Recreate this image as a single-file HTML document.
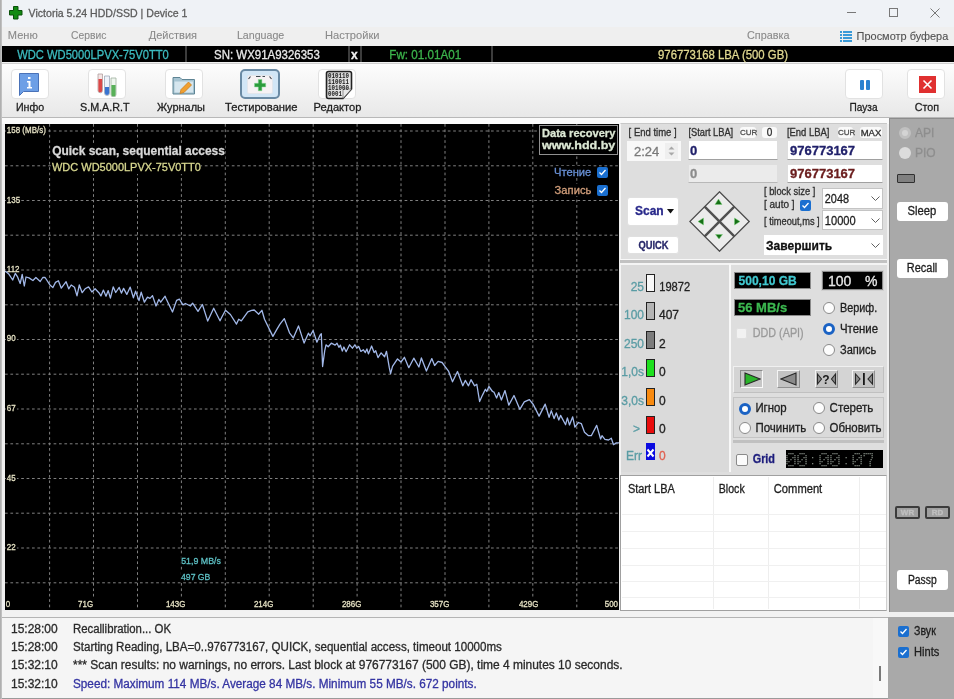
<!DOCTYPE html>
<html><head><meta charset="utf-8">
<style>
*{margin:0;padding:0;box-sizing:border-box}
html,body{width:954px;height:699px;overflow:hidden;background:#f0f0f0;font-family:"Liberation Sans",sans-serif;position:relative;-webkit-text-stroke:0.3px currentColor}
.a{position:absolute;white-space:nowrap}
#title{left:0;top:0;width:954px;height:27px;background:#eff2f6}
#menu{left:0;top:27px;width:954px;height:19px;background:#efefef}
.mi{position:absolute;top:29px;font-size:10.5px;color:#8a8a8a;-webkit-text-stroke:0.1px currentColor;white-space:nowrap}
#bbar{left:2px;top:46px;width:952px;height:16px;background:#000}
.bt{position:absolute;top:48px;font-size:12px;line-height:14px;white-space:nowrap}
.sep{position:absolute;top:46px;width:2px;height:16px;background:#3c3c3c}
#tb{left:2px;top:63px;width:952px;height:55px;background:linear-gradient(#fdfdfd,#e8e8e8);border-top:1px solid #d0d0d0;border-bottom:1px solid #b8b8b8}
.tbb{position:absolute;top:69px;width:38px;height:30px;background:#fff;border:1px solid #e2e2e2;border-radius:4px}
.tbl{position:absolute;top:101px;font-size:11.5px;color:#1e1e1e;white-space:nowrap;text-align:center}
#chart{left:5px;top:124px;width:614px;height:486px;background:#000;overflow:hidden}
.cl{position:absolute;font-size:9.5px;line-height:11px;color:#e6e2c4;background:#000;padding:0 1px;white-space:nowrap;transform:scaleX(.84);transform-origin:0 0}
#rp{left:620px;top:123px;width:267px;height:488px;background:#dedede;border-left:1px solid #f4f4f4;border-top:1px solid #c8c8c8}
.sl{position:absolute;font-size:10px;line-height:12px;color:#303030;white-space:nowrap}
.inp{position:absolute;background:#fff;border:1px solid #dedede;border-bottom:1px solid #a0a0a0}
.wbtn{position:absolute;background:#fff;border-radius:3px;border:1px solid #e0e0e0}
.rad{position:absolute;width:12px;height:12px;border-radius:50%;background:#fdfdfd;border:1px solid #8a8a8a}
.rad.on{background:#fff;border:3.5px solid #1a62c4}
.cb{position:absolute;width:11px;height:11px;border-radius:2px;background:#1a6fd0}
.cb svg{position:absolute;left:0;top:0}
.t12{font-size:12px;color:#1e1e1e}
#gp{left:889px;top:118px;width:65px;height:494px;background:#a9a9a9;border-left:1px solid #8c8c8c;border-top:1px solid #8c8c8c}
#log{left:2px;top:617px;width:886px;height:82px;background:#f5f5f5;border-top:1px solid #b4b4b4;border-bottom:1px solid #9a9a9a}
.lr{position:absolute;font-size:12px;line-height:14px;color:#2a2a2a;white-space:nowrap}
#gp2{left:888px;top:617px;width:66px;height:82px;background:#a9a9a9}
</style></head><body><div style="position:absolute;left:0;top:0;width:954px;height:699px;will-change:transform">
<div class="a" style="left:0;top:0;width:2px;height:699px;background:linear-gradient(90deg,#a8a8a8,#c8c8c8);z-index:5"></div>
<div id="title" class="a"></div>
<svg class="a" style="left:9px;top:6px" width="14" height="14" viewBox="0 0 14 14"><path d="M4.5 0.5h4.5v4h4v4.5h-4v4h-4.5v-4h-4v-4.5h4z" fill="#128a12" stroke="#0a500a" stroke-width="1"/></svg>
<div class="a" style="left:29px;top:6.5px;font-size:11.3px;color:#5c5c5c;;transform-origin:0 0;transform:translateX(-0.40px) scaleX(0.9355)">Victoria 5.24 HDD/SSD | Device 1</div>
<div class="a" style="left:847px;top:12px;width:9px;height:1px;background:#787878"></div>
<div class="a" style="left:889px;top:8px;width:9px;height:9px;border:1px solid #787878"></div>
<svg class="a" style="left:930px;top:8px" width="10" height="10"><path d="M0.5 0.5L9.5 9.5M9.5 0.5L0.5 9.5" stroke="#787878" stroke-width="1"/></svg>

<div id="menu" class="a"></div>
<div class="mi" style="left:8px;;transform-origin:0 0;transform:translateX(-0.20px) scaleX(1.0532)">Меню</div>
<div class="mi" style="left:71px;;transform-origin:0 0;transform:translateX(0.00px) scaleX(0.9814)">Сервис</div>
<div class="mi" style="left:149px;;transform-origin:0 0;transform:translateX(-0.20px) scaleX(1.0475)">Действия</div>
<div class="mi" style="left:237px;;transform-origin:0 0;transform:translateX(-0.10px) scaleX(1.0146)">Language</div>
<div class="mi" style="left:325px;;transform-origin:0 0;transform:translateX(0.00px) scaleX(1.0583)">Настройки</div>
<div class="mi" style="left:747px;;transform-origin:0 0;transform:translateX(0.00px) scaleX(1.0315)">Справка</div>
<svg class="a" style="left:840px;top:31px" width="12" height="12"><g fill="#3a9ad8"><rect x="0" y="0" width="2" height="2"/><rect x="3" y="0" width="9" height="2"/><rect x="0" y="3" width="2" height="2"/><rect x="3" y="3" width="9" height="2"/><rect x="0" y="6" width="2" height="2"/><rect x="3" y="6" width="9" height="2"/><rect x="0" y="9" width="2" height="2"/><rect x="3" y="9" width="9" height="2"/></g></svg>
<div class="mi" style="left:857px;color:#505050;font-size:11px;top:29.5px;;transform-origin:0 0;transform:translateX(-0.40px) scaleX(0.9952)">Просмотр буфера</div>

<div id="bbar" class="a"></div>
<div class="bt" style="left:17px;color:#3cbcc0;;transform-origin:0 0;transform:translateX(0.20px) scaleX(0.9316)">WDC WD5000LPVX-75V0TT0</div>
<div class="sep" style="left:185px"></div>
<div class="bt" style="left:214px;color:#e8e8e8;;transform-origin:0 0;transform:translateX(0.10px) scaleX(0.9544)">SN: WX91A9326353</div>
<div class="sep" style="left:348px"></div>
<div class="bt" style="left:351px;color:#f0f0f0;font-weight:bold">x</div>
<div class="sep" style="left:360px"></div>
<div class="bt" style="left:389px;color:#3cb44c;;transform-origin:0 0;transform:translateX(0.30px) scaleX(0.9710)">Fw: 01.01A01</div>
<div class="sep" style="left:491px"></div>
<div class="bt" style="left:658px;color:#e0d890;;transform-origin:0 0;transform:translateX(0.00px) scaleX(0.9459)">976773168 LBA (500 GB)</div>

<div id="tb" class="a"></div>
<div class="tbb" style="left:11px"></div>
<svg class="a" style="left:19px;top:73px" width="21" height="23" viewBox="0 0 21 23"><path d="M0.5 0.5h19v18h-15l-4 4z" fill="#6d9fe6" stroke="#4a72b8"/><rect x="9" y="4" width="2.5" height="2" fill="#fff"/><path d="M8 8h3.5v6h1.5v1.5h-5v-1.5h1.5v-4.5h-1.5z" fill="#fff"/></svg>
<div class="tbl" style="left:16px;;transform-origin:0 0;transform:translateX(-0.10px) scaleX(0.9283)">Инфо</div>
<div class="tbb" style="left:88px"></div>
<svg class="a" style="left:96px;top:73px" width="22" height="24" viewBox="0 0 22 24"><path d="M2 1h4.5v16.5a2.25 2.25 0 0 1-4.5 0z" fill="#f4e4e4" stroke="#b0a0a0" stroke-width="0.8"/><path d="M2.4 6h3.7v11.5a1.85 1.85 0 0 1-3.7 0z" fill="#dc4848"/><path d="M8.5 3h5v17a2.5 2.5 0 0 1-5 0z" fill="#eef2fa" stroke="#a0a8b8" stroke-width="0.8"/><path d="M8.9 14h4.2v6a2.1 2.1 0 0 1-4.2 0z" fill="#3a74d0"/><path d="M15 5h5v16.5a2.5 2.5 0 0 1-5 0z" fill="#eef6ee" stroke="#a0b0a0" stroke-width="0.8"/><path d="M15.4 12h4.2v9.5a2.1 2.1 0 0 1-4.2 0z" fill="#58b058"/></svg>
<div class="tbl" style="left:80px;;transform-origin:0 0;transform:translateX(0.00px) scaleX(0.9353)">S.M.A.R.T</div>
<div class="tbb" style="left:165px"></div>
<svg class="a" style="left:172px;top:75px" width="24" height="21" viewBox="0 0 24 21"><path d="M1 2.5h7l2 2h12.5v14.5h-21.5z" fill="#a6c4d2" stroke="#5e8494" stroke-width="1"/><rect x="2.5" y="6.5" width="18.5" height="11" fill="#d6e6ee"/><path d="M8 18.5l1-4 7.5-7.5 3 3-7.5 7.5z" fill="#f0a030" stroke="#c87818" stroke-width="0.7"/></svg>
<div class="tbl" style="left:157px;;transform-origin:0 0;transform:translateX(0.00px) scaleX(0.9555)">Журналы</div>
<div class="tbb" style="left:240px;width:40px;background:#d2e6f6;border:2px solid #6a8aa4;border-radius:5px"></div>
<svg class="a" style="left:246px;top:72px" width="28" height="23" viewBox="0 0 28 23"><rect x="1.5" y="3.5" width="25" height="18" rx="1.5" fill="#f6f2f4" stroke="#e2e6ec" stroke-width="1"/><path d="M2.5 7l2-2.5M25.5 7l-2-2.5M10 4.5h4.5M16.5 4.5h2.5" stroke="#404850" stroke-width="1.2"/><path d="M12.3 7.5h3.6v3.8h3.8v3.6h-3.8v3.8h-3.6v-3.8h-3.8v-3.6h3.8z" fill="#2c9c3c" stroke="#8ad89a" stroke-width="0.5" stroke-linejoin="round"/></svg>
<div class="tbl" style="left:225px;;transform-origin:0 0;transform:translateX(0.00px) scaleX(0.9723)">Тестирование</div>
<div class="tbb" style="left:318px"></div>
<svg class="a" style="left:325px;top:70px" width="29" height="31" viewBox="0 0 29 31"><defs><linearGradient id="pg" x1="0" y1="0" x2="1" y2="1"><stop offset="0" stop-color="#c8c8c8"/><stop offset="1" stop-color="#f4f4f4"/></linearGradient></defs><path d="M1.5 3.5Q1.5 1.5 3.5 1.5H24.5Q26.5 1.5 26.5 3.5V19L18 28.5H3.5Q1.5 28.5 1.5 26.5Z" fill="url(#pg)" stroke="#222" stroke-width="1.6"/><path d="M18 28.5L26.5 19H19Q18 19 18 20Z" fill="#e8e8e8" stroke="#555" stroke-width="0.6"/><g font-family="Liberation Mono" font-weight="bold" font-size="6.4" fill="#1a1a1a" style="-webkit-text-stroke:0"><text x="3" y="8" textLength="21" lengthAdjust="spacingAndGlyphs">010110</text><text x="3" y="14" textLength="21" lengthAdjust="spacingAndGlyphs">110011</text><text x="3" y="20" textLength="21" lengthAdjust="spacingAndGlyphs">101000</text><text x="3" y="26" textLength="14" lengthAdjust="spacingAndGlyphs">0001</text></g></svg>
<div class="tbl" style="left:314px;;transform-origin:0 0;transform:translateX(-0.40px) scaleX(0.9654)">Редактор</div>
<div class="tbb" style="left:845px"></div>
<div class="a" style="left:860px;top:80px;width:4px;height:10px;background:#2a82d0;border-radius:1px"></div>
<div class="a" style="left:866px;top:80px;width:4px;height:10px;background:#2a82d0;border-radius:1px"></div>
<div class="tbl" style="left:849px;;transform-origin:0 0;transform:translateX(0.50px) scaleX(0.8794)">Пауза</div>
<div class="tbb" style="left:907px"></div>
<svg class="a" style="left:919px;top:76px" width="17" height="17"><rect width="17" height="17" fill="#e03030"/><path d="M4.5 4.5l8 8M12.5 4.5l-8 8" stroke="#fff" stroke-width="1.6"/></svg>
<div class="tbl" style="left:914px;;transform-origin:0 0;transform:translateX(0.80px) scaleX(0.9318)">Стоп</div>

<div class="a" style="left:1px;top:118px;width:888px;height:6px;background:#fafafa"></div>
<div id="chart" class="a">
<svg style="position:absolute;left:0;top:0" width="614" height="486">
<g stroke="#808080" stroke-width="1" stroke-dasharray="2.7 2.7">
<line x1="44.6" y1="0" x2="44.6" y2="486"/>
<line x1="88.5" y1="0" x2="88.5" y2="486"/>
<line x1="132.5" y1="0" x2="132.5" y2="486"/>
<line x1="176.4" y1="0" x2="176.4" y2="486"/>
<line x1="220.3" y1="0" x2="220.3" y2="486"/>
<line x1="264.2" y1="0" x2="264.2" y2="486"/>
<line x1="308.2" y1="0" x2="308.2" y2="486"/>
<line x1="352.1" y1="0" x2="352.1" y2="486"/>
<line x1="396.0" y1="0" x2="396.0" y2="486"/>
<line x1="440.0" y1="0" x2="440.0" y2="486"/>
<line x1="483.9" y1="0" x2="483.9" y2="486"/>
<line x1="527.8" y1="0" x2="527.8" y2="486"/>
<line x1="571.8" y1="0" x2="571.8" y2="486"/>
<line x1="0" y1="7.0" x2="614" y2="7.0"/>
<line x1="0" y1="41.8" x2="614" y2="41.8"/>
<line x1="0" y1="76.5" x2="614" y2="76.5"/>
<line x1="0" y1="111.2" x2="614" y2="111.2"/>
<line x1="0" y1="146.0" x2="614" y2="146.0"/>
<line x1="0" y1="180.8" x2="614" y2="180.8"/>
<line x1="0" y1="215.5" x2="614" y2="215.5"/>
<line x1="0" y1="250.2" x2="614" y2="250.2"/>
<line x1="0" y1="285.0" x2="614" y2="285.0"/>
<line x1="0" y1="319.8" x2="614" y2="319.8"/>
<line x1="0" y1="354.5" x2="614" y2="354.5"/>
<line x1="0" y1="389.2" x2="614" y2="389.2"/>
<line x1="0" y1="424.0" x2="614" y2="424.0"/>
<line x1="0" y1="458.8" x2="614" y2="458.8"/>
</g>
</svg>
<div class="cl" style="left:1px;top:0px">158 (MB/s)</div>
<div class="cl" style="left:1px;top:70px">135</div>
<div class="cl" style="left:1px;top:139px">112</div>
<div class="cl" style="left:1px;top:208px">90</div>
<div class="cl" style="left:1px;top:278px">67</div>
<div class="cl" style="left:1px;top:348px">45</div>
<div class="cl" style="left:1px;top:417px">22</div>
<div class="cl" style="left:0px;top:474px">0</div>
<div class="cl" style="right:525px;top:474px;transform-origin:100% 0">71G</div>
<div class="cl" style="right:433px;top:474px;transform-origin:100% 0">143G</div>
<div class="cl" style="right:345px;top:474px;transform-origin:100% 0">214G</div>
<div class="cl" style="right:257px;top:474px;transform-origin:100% 0">286G</div>
<div class="cl" style="right:169px;top:474px;transform-origin:100% 0">357G</div>
<div class="cl" style="right:80px;top:474px;transform-origin:100% 0">429G</div>
<div class="cl" style="right:0px;top:474px;transform-origin:100% 0">500</div>
<svg style="position:absolute;left:0;top:0" width="614" height="486"><polyline points="0.0,147.7 1.1,147.7 4.0,150.3 7.7,156.0 10.3,149.4 12.4,152.6 15.2,159.5 17.2,150.4 19.3,162.0 21.0,153.0 24.0,153.9 27.9,156.5 30.9,153.5 35.2,157.5 37.8,153.5 40.1,153.5 45.2,161.3 47.9,163.5 50.5,158.4 53.4,156.8 56.3,164.2 61.1,157.7 63.7,164.8 66.2,161.0 69.5,163.2 72.0,171.9 74.3,161.0 77.2,168.7 80.1,164.8 83.6,162.9 86.9,168.0 90.1,164.8 93.9,168.7 95.9,171.9 98.4,166.1 101.0,172.2 103.2,166.6 105.4,174.1 108.2,162.8 110.7,168.5 114.2,163.4 116.4,169.1 118.6,164.4 121.8,170.4 125.2,163.1 128.4,173.8 130.6,167.2 134.0,176.6 136.2,168.2 139.4,178.2 142.5,173.2 145.0,174.4 147.5,171.6 151.0,182.0 153.8,175.4 155.7,178.2 160.1,172.2 160.9,174.2 167.5,188.0 171.6,176.4 174.4,175.1 177.9,180.8 180.4,179.5 185.4,182.0 187.6,179.2 193.0,187.4 197.4,180.5 202.7,197.1 208.7,184.2 215.0,196.8 217.0,192.7 220.5,186.3 225.4,190.5 231.5,200.1 233.7,195.3 236.3,196.9 242.8,187.9 246.6,186.3 249.2,186.0 253.7,190.2 256.9,186.3 259.5,195.3 267.9,212.4 271.7,205.6 275.0,200.2 279.3,194.6 284.5,208.8 288.3,213.9 293.5,201.9 299.1,219.1 303.4,209.2 305.1,211.8 308.1,206.6 311.9,218.2 315.0,211.3 316.3,209.8 317.6,242.5 319.7,226.8 321.0,220.8 323.2,222.7 326.3,219.2 330.1,221.1 332.0,219.2 333.9,223.3 335.4,221.1 337.3,227.1 338.9,223.0 341.1,227.7 344.6,220.8 347.4,224.2 349.9,220.8 351.8,224.2 353.7,222.4 355.9,227.4 358.4,225.8 360.3,228.6 361.9,224.9 363.4,229.9 366.6,222.0 369.1,228.6 370.7,226.8 373.0,233.6 376.1,228.9 379.6,232.7 381.5,227.3 384.3,243.7 385.6,249.6 387.5,242.4 392.5,234.9 396.0,238.0 399.4,233.3 403.8,243.7 408.8,234.2 413.9,243.0 416.4,233.9 421.4,247.1 426.8,234.6 429.6,241.5 433.1,237.4 437.1,238.5 440.3,242.8 443.5,247.1 447.5,257.8 452.5,247.5 457.8,261.8 460.3,256.4 463.5,261.8 466.0,255.7 469.6,261.8 471.8,260.3 474.6,277.5 477.5,271.1 480.4,265.3 481.8,267.5 483.9,262.5 487.5,267.5 489.0,268.2 491.6,274.0 493.8,268.6 496.4,276.0 500.0,266.6 503.8,281.1 509.0,271.5 514.8,285.3 519.3,277.9 524.4,275.6 528.3,280.5 534.1,292.1 540.2,280.1 544.1,293.3 546.3,286.6 549.1,294.6 551.3,288.9 553.8,296.0 555.6,291.4 560.6,300.7 562.4,293.9 564.5,301.0 567.7,292.8 569.9,303.2 573.4,298.5 576.3,299.6 579.5,308.2 583.5,311.7 586.3,311.7 591.7,301.4 595.6,315.0 597.0,311.7 599.9,315.3 603.5,316.0 606.3,314.2 608.5,320.7 611.3,318.9 614.0,318.9" fill="none" stroke="#a2b8e8" stroke-width="1.3" stroke-linejoin="round"/></svg>
<div class="a" style="left:47px;top:20px;font-size:12.5px;font-weight:bold;color:#d8d8d8;background:#000;line-height:15px;;transform-origin:0 0;transform:translateX(0.20px) scaleX(0.9560)">Quick scan, sequential access</div>
<div class="a" style="left:47px;top:36px;font-size:11.5px;color:#d8d890;background:#000;line-height:14px;;transform-origin:0 0;transform:translateX(0.00px) scaleX(0.9548)">WDC WD5000LPVX-75V0TT0</div>
<div class="a" style="left:534px;top:1px;width:79px;height:30px;border:1px solid #909090;background:#000"></div>
<div class="a" style="left:537px;top:3px;font-size:11.5px;font-weight:bold;color:#dce8d4;line-height:13px;;transform-origin:0 0;transform:translateX(0.00px) scaleX(0.9635)">Data recovery</div>
<div class="a" style="left:537px;top:15px;font-size:11.5px;font-weight:bold;color:#dce8d4;line-height:13px;;transform-origin:0 0;transform:translateX(0.00px) scaleX(1.0892)">www.hdd.by</div>
<div class="a" style="left:549px;top:42px;font-size:11.5px;color:#6a92d8;background:#000;;transform-origin:0 0;transform:translateX(0.00px) scaleX(0.9720)">Чтение</div>
<div class="cb" style="left:592px;top:43px"><svg width="11" height="11"><path d="M2.5 5.5l2 2 4-4.5" fill="none" stroke="#fff" stroke-width="1.3"/></svg></div>
<div class="a" style="left:549px;top:60px;font-size:11.5px;color:#d4a07c;background:#000;;transform-origin:0 0;transform:translateX(0.60px) scaleX(0.9726)">Запись</div>
<div class="cb" style="left:592px;top:61px"><svg width="11" height="11"><path d="M2.5 5.5l2 2 4-4.5" fill="none" stroke="#fff" stroke-width="1.3"/></svg></div>
<div class="a" style="left:176px;top:431px;font-size:9.5px;color:#5ec2c6;background:#000;;transform-origin:0 0;transform:translateX(0.20px) scaleX(0.9303)">51,9 MB/s</div>
<div class="a" style="left:176px;top:447px;font-size:9.5px;color:#5ec2c6;background:#000;;transform-origin:0 0;transform:translateX(0.00px) scaleX(0.9125)">497 GB</div>
</div>

<div id="rp" class="a"></div>
<div class="sl" style="left:628px;top:127px;;transform-origin:0 0;transform:translateX(0.60px) scaleX(0.9510)">[ End time ]</div>
<div class="inp" style="left:627px;top:141px;width:54px;height:20px;background:#f8f8f8;border:none"></div>
<div class="a" style="left:634px;top:144px;font-size:13px;color:#7a7a7a">2:24</div>
<div class="a" style="left:665px;top:143px;width:13px;height:16px;background:#efefef"></div>
<svg class="a" style="left:667px;top:145px" width="9" height="12"><path d="M1.5 4.5l3-3 3 3z M1.5 7.5l3 3 3-3z" fill="#a8a8a8"/></svg>
<div class="sl" style="left:688px;top:127px;;transform-origin:0 0;transform:translateX(0.40px) scaleX(0.9264)">[Start LBA]</div>
<div class="a" style="left:740px;top:127px;width:16px;height:11px;background:#fafafa;border-radius:3px;font-size:8px;line-height:11px;color:#505050;text-align:center">CUR</div>
<div class="a" style="left:762px;top:127px;width:15px;height:11px;background:#fafafa;border-radius:3px;font-size:10px;line-height:11px;color:#303030;text-align:center">0</div>
<div class="inp" style="left:688px;top:140px;width:90px;height:20px"></div>
<div class="a" style="left:690px;top:143px;font-size:13px;font-weight:bold;color:#20206a">0</div>
<div class="inp" style="left:688px;top:164px;width:90px;height:19px;background:#ebebeb;border-bottom:1px solid #b8b8b8"></div>
<div class="a" style="left:690px;top:166px;font-size:13px;font-weight:bold;color:#8c8c8c">0</div>
<div class="sl" style="left:787px;top:127px;;transform-origin:0 0;transform:translateX(-0.10px) scaleX(0.9438)">[End LBA]</div>
<div class="a" style="left:838px;top:127px;width:15px;height:11px;background:#fafafa;border-radius:3px;font-size:8px;line-height:11px;color:#505050;text-align:center">CUR</div>
<div class="a" style="left:860px;top:127px;width:22px;height:11px;background:#fafafa;border-radius:3px;font-size:9.5px;line-height:11px;color:#303030;text-align:center">MAX</div>
<div class="inp" style="left:787px;top:140px;width:96px;height:20px"></div>
<div class="a" style="left:790px;top:143px;font-size:13px;font-weight:bold;color:#20206a">976773167</div>
<div class="inp" style="left:787px;top:164px;width:96px;height:19px"></div>
<div class="a" style="left:790px;top:166px;font-size:13px;font-weight:bold;color:#6a1c1c">976773167</div>

<div class="wbtn" style="left:627px;top:197px;width:52px;height:29px"></div>
<div class="a" style="left:635px;top:204px;font-size:12px;font-weight:bold;color:#28288a">Scan</div>
<svg class="a" style="left:667px;top:209px" width="7" height="5"><path d="M0 0h7l-3.5 4.5z" fill="#111"/></svg>
<div class="wbtn" style="left:627px;top:236px;width:52px;height:18px"></div>
<div class="a" style="left:638px;top:239.5px;font-size:10px;font-weight:bold;color:#28286a;;transform-origin:0 0;transform:translateX(0.50px) scaleX(0.9338)">QUICK</div>

<svg class="a" style="left:689px;top:191px" width="62" height="61" viewBox="0 0 62 61">
<g transform="translate(30.5,30.5) rotate(45)">
<rect x="-21" y="-21" width="42" height="42" fill="#ececec" stroke="#4a4a4a" stroke-width="1.3"/>
<line x1="0" y1="-21" x2="0" y2="21" stroke="#505050" stroke-width="2.4"/>
<line x1="-21" y1="0" x2="21" y2="0" stroke="#505050" stroke-width="2.4"/>
</g>
<g fill="#167016" stroke="#7ad07a" stroke-width="0.5">
<path d="M26 13.5l3.5-5.5 3.5 5.5z"/>
<path d="M26.5 43.5h7l-3.5 4.5z"/>
<path d="M9 30.5l5.5-3.5v7z"/>
<path d="M51 30.5l-5.5-3.5v7z"/>
</g>
</svg>

<div class="sl" style="left:764px;top:186px;;transform-origin:0 0;transform:translateX(0.00px) scaleX(0.9322)">[ block size ]</div>
<div class="sl" style="left:764px;top:199px">[ auto ]</div>
<div class="cb" style="left:800px;top:200px"><svg width="11" height="11"><path d="M2.5 5.5l2 2 4-4.5" fill="none" stroke="#fff" stroke-width="1.3"/></svg></div>
<div class="sl" style="left:764px;top:216px;;transform-origin:0 0;transform:translateX(0.00px) scaleX(0.9281)">[ timeout,ms ]</div>
<div class="a" style="left:822px;top:188px;width:61px;height:21px;background:#fff;border:1px solid #c4c4c4"></div>
<div class="a" style="left:825px;top:191px;font-size:13px;color:#1e1e1e;;transform-origin:0 0;transform:translateX(-0.20px) scaleX(0.8367)">2048</div>
<svg class="a" style="left:871px;top:196px" width="9" height="6"><path d="M0.5 0.5l4 4 4-4" fill="none" stroke="#606060"/></svg>
<div class="a" style="left:822px;top:210px;width:61px;height:20px;background:#fff;border:1px solid #c4c4c4"></div>
<div class="a" style="left:825px;top:213px;font-size:13px;color:#1e1e1e;;transform-origin:0 0;transform:translateX(-0.20px) scaleX(0.8546)">10000</div>
<svg class="a" style="left:871px;top:218px" width="9" height="6"><path d="M0.5 0.5l4 4 4-4" fill="none" stroke="#606060"/></svg>
<div class="a" style="left:764px;top:235px;width:119px;height:20px;background:#fff"></div>
<div class="a" style="left:766px;top:238px;font-size:13px;font-weight:bold;color:#111;;transform-origin:0 0;transform:translateX(0.10px) scaleX(0.9237)">Завершить</div>
<svg class="a" style="left:871px;top:243px" width="9" height="6"><path d="M0.5 0.5l4 4 4-4" fill="none" stroke="#606060"/></svg>

<div class="a" style="left:620px;top:259px;width:267px;height:1px;background:#f8f8f8"></div>
<div class="a" style="left:620px;top:260px;width:267px;height:3px;background:#c2c2c2"></div>
<div class="a" style="left:620px;top:263px;width:267px;height:2px;background:#f4f4f4"></div>
<div class="a" style="left:621px;top:265px;width:108px;height:207px;background:#dadada"></div>
<div class="a" style="left:729px;top:264px;width:2px;height:208px;background:#f8f8f8"></div>

<div class="a" style="left:620px;top:280px;width:24px;text-align:right;font-size:12px;color:#5a9ca4">25</div>
<div class="a" style="left:646px;top:274px;width:9px;height:18px;background:#f8f8f8;border:1px solid #222"></div>
<div class="a" style="left:659px;top:280px;font-size:12px;color:#222;;transform-origin:0 0;transform:translateX(0.20px) scaleX(0.9258)">19872</div>
<div class="a" style="left:620px;top:308px;width:24px;text-align:right;font-size:12px;color:#5a9ca4">100</div>
<div class="a" style="left:646px;top:302px;width:9px;height:18px;background:#b4b4b4;border:1px solid #222"></div>
<div class="a" style="left:659px;top:308px;font-size:12px;color:#222">407</div>
<div class="a" style="left:620px;top:337px;width:24px;text-align:right;font-size:12px;color:#5a9ca4">250</div>
<div class="a" style="left:646px;top:331px;width:9px;height:18px;background:#7c7c7c;border:1px solid #222"></div>
<div class="a" style="left:659px;top:337px;font-size:12px;color:#222">2</div>
<div class="a" style="left:620px;top:365px;width:24px;text-align:right;font-size:12px;color:#5a9ca4">1,0s</div>
<div class="a" style="left:646px;top:359px;width:9px;height:18px;background:#1ee01e;border:1px solid #222"></div>
<div class="a" style="left:659px;top:365px;font-size:12px;color:#222">0</div>
<div class="a" style="left:620px;top:394px;width:24px;text-align:right;font-size:12px;color:#5a9ca4">3,0s</div>
<div class="a" style="left:646px;top:388px;width:9px;height:18px;background:#f88a10;border:1px solid #222"></div>
<div class="a" style="left:659px;top:394px;font-size:12px;color:#222">0</div>
<div class="a" style="left:620px;top:422px;width:20px;text-align:right;font-size:12px;color:#5a9ca4">&gt;</div>
<div class="a" style="left:646px;top:416px;width:9px;height:18px;background:#e80c0c;border:1px solid #222"></div>
<div class="a" style="left:659px;top:422px;font-size:12px;color:#222">0</div>
<div class="a" style="left:620px;top:449px;width:22px;text-align:right;font-size:12px;color:#5a9ca4">Err</div>
<div class="a" style="left:646px;top:443px;width:9px;height:17px;background:#0a0ae0"></div>
<svg class="a" style="left:646px;top:448px" width="9" height="10"><path d="M1.5 1.5l6 7M7.5 1.5l-6 7" stroke="#fff" stroke-width="2"/></svg>
<div class="a" style="left:659px;top:449px;font-size:12px;color:#e06050">0</div>

<div class="a" style="left:734px;top:272px;width:77px;height:17px;background:#000;border:1px solid #8a8a8a"></div>
<div class="a" style="left:738px;top:273px;font-size:13px;font-weight:bold;color:#40c8d0;;transform-origin:0 0;transform:translateX(0.50px) scaleX(0.9272)">500,10 GB</div>
<div class="a" style="left:822px;top:271px;width:61px;height:19px;background:#000;border:1px solid #8a8a8a;box-shadow:0 0 0 1px #d0d0d0"></div>
<div class="a" style="left:828px;top:273px;font-size:14px;color:#e8e8e8">100</div>
<div class="a" style="left:865px;top:273px;font-size:14px;color:#e8e8e8">%</div>
<div class="a" style="left:734px;top:299px;width:77px;height:17px;background:#000;border:1px solid #8a8a8a"></div>
<div class="a" style="left:738px;top:300px;font-size:13px;font-weight:bold;color:#3cb850">56 MB/s</div>
<div class="a" style="left:736px;top:328px;width:11px;height:11px;background:#f2f2f2;border:1px solid #e0e0e0;border-radius:2px"></div>
<div class="a" style="left:752px;top:326px;font-size:12px;color:#9a9a9a;;transform-origin:0 0;transform:translateX(0.70px) scaleX(0.8999)">DDD (API)</div>
<div class="rad" style="left:823px;top:302px"></div>
<div class="a" style="left:840px;top:301px;font-size:12px;color:#1e1e1e;;transform-origin:0 0;transform:translateX(0.00px) scaleX(0.9015)">Вериф.</div>
<div class="rad on" style="left:823px;top:323px"></div>
<div class="a" style="left:840px;top:322px;font-size:12px;color:#1e1e1e;;transform-origin:0 0;transform:translateX(0.00px) scaleX(0.9489)">Чтение</div>
<div class="rad" style="left:823px;top:344px"></div>
<div class="a" style="left:840px;top:343px;font-size:12px;color:#1e1e1e;;transform-origin:0 0;transform:translateX(0.00px) scaleX(0.9219)">Запись</div>

<div class="a" style="left:733px;top:366px;width:151px;height:27px;background:#d4d4d4;border:1px solid;border-color:#f0f0f0 #c0c0c0 #c0c0c0 #f0f0f0"></div>
<div class="a" style="left:740px;top:370px;width:23px;height:18px;background:#c6c6c6;border:1px solid;border-color:#8a8a8a #fafafa #fafafa #8a8a8a"></div>
<svg class="a" style="left:744px;top:372px" width="17" height="14"><path d="M1 1l15 6-15 6z" fill="#2ab42a" stroke="#282828" stroke-width="1.1"/></svg>
<div class="a" style="left:777px;top:370px;width:23px;height:18px;background:#c2c2c2;border:1px solid;border-color:#f4f4f4 #909090 #909090 #f4f4f4"></div>
<svg class="a" style="left:780px;top:372px" width="17" height="14"><path d="M16 1l-15 6 15 6z" fill="#8a8a8a" stroke="#282828" stroke-width="1.1"/></svg>
<div class="a" style="left:815px;top:370px;width:23px;height:18px;background:#c2c2c2;border:1px solid;border-color:#f4f4f4 #909090 #909090 #f4f4f4"></div>
<svg class="a" style="left:816px;top:372px" width="21" height="14"><path d="M1.5 2l4 5-4 5z M19.5 2l-4 5 4 5z" fill="#8a8a8a" stroke="#282828" stroke-width="1.1"/><text x="6.3" y="12" font-size="12" font-weight="bold" font-family="Liberation Sans" fill="#181818" style="-webkit-text-stroke:0">?</text></svg>
<div class="a" style="left:852px;top:370px;width:23px;height:18px;background:#c2c2c2;border:1px solid;border-color:#f4f4f4 #909090 #909090 #f4f4f4"></div>
<svg class="a" style="left:854px;top:372px" width="20" height="14"><path d="M1.5 2l4.5 5-4.5 5z M18.5 2l-4.5 5 4.5 5z" fill="#8a8a8a" stroke="#282828" stroke-width="1.1"/><rect x="9" y="1" width="1.8" height="12" fill="#181818"/></svg>

<div class="a" style="left:733px;top:397px;width:151px;height:41px;background:#dadada;border:1px solid #c4c4c4"></div>
<div class="rad on" style="left:739px;top:403px"></div>
<div class="a" style="left:755px;top:401px;font-size:12px;color:#1e1e1e;;transform-origin:0 0;transform:translateX(0.40px) scaleX(0.9489)">Игнор</div>
<div class="rad" style="left:813px;top:402px"></div>
<div class="a" style="left:829px;top:401px;font-size:12px;color:#1e1e1e;;transform-origin:0 0;transform:translateX(0.60px) scaleX(0.9646)">Стереть</div>
<div class="rad" style="left:739px;top:422px"></div>
<div class="a" style="left:755px;top:421px;font-size:12px;color:#1e1e1e;;transform-origin:0 0;transform:translateX(0.40px) scaleX(0.9590)">Починить</div>
<div class="rad" style="left:813px;top:422px"></div>
<div class="a" style="left:829px;top:421px;font-size:12px;color:#1e1e1e;;transform-origin:0 0;transform:translateX(0.60px) scaleX(0.9532)">Обновить</div>
<div class="a" style="left:733px;top:440px;width:151px;height:3px;background:#c0c0c0"></div>

<div class="a" style="left:736px;top:454px;width:12px;height:12px;background:#fbfbfb;border:1px solid #8a8a8a;border-radius:2px"></div>
<div class="a" style="left:752px;top:452px;font-size:12px;font-weight:bold;color:#1c1c7c;;transform-origin:0 0;transform:translateX(0.70px) scaleX(0.9039)">Grid</div>
<div class="a" style="left:786px;top:450px;width:97px;height:18px;background:#000"></div>
<svg class="a" style="left:786px;top:453px" width="90" height="14"><g fill="#7c847c"><rect x="2.3" y="0.0" width="1.3" height="1.3"/><rect x="4.3" y="0.0" width="1.3" height="1.3"/><rect x="6.3" y="0.0" width="1.3" height="1.3"/><rect x="0.3" y="2.0" width="1.3" height="1.3"/><rect x="0.3" y="4.0" width="1.3" height="1.3"/><rect x="0.3" y="6.0" width="1.3" height="1.3"/><rect x="0.3" y="8.0" width="1.3" height="1.3"/><rect x="0.3" y="10.0" width="1.3" height="1.3"/><rect x="8.3" y="2.0" width="1.3" height="1.3"/><rect x="8.3" y="4.0" width="1.3" height="1.3"/><rect x="8.3" y="6.0" width="1.3" height="1.3"/><rect x="8.3" y="8.0" width="1.3" height="1.3"/><rect x="8.3" y="10.0" width="1.3" height="1.3"/><rect x="2.3" y="12.0" width="1.3" height="1.3"/><rect x="4.3" y="12.0" width="1.3" height="1.3"/><rect x="6.3" y="12.0" width="1.3" height="1.3"/><rect x="6.3" y="4.0" width="1.3" height="1.3"/><rect x="4.3" y="6.0" width="1.3" height="1.3"/><rect x="2.3" y="8.0" width="1.3" height="1.3"/><rect x="13.4" y="0.0" width="1.3" height="1.3"/><rect x="15.4" y="0.0" width="1.3" height="1.3"/><rect x="17.4" y="0.0" width="1.3" height="1.3"/><rect x="11.4" y="2.0" width="1.3" height="1.3"/><rect x="11.4" y="4.0" width="1.3" height="1.3"/><rect x="11.4" y="6.0" width="1.3" height="1.3"/><rect x="11.4" y="8.0" width="1.3" height="1.3"/><rect x="11.4" y="10.0" width="1.3" height="1.3"/><rect x="19.4" y="2.0" width="1.3" height="1.3"/><rect x="19.4" y="4.0" width="1.3" height="1.3"/><rect x="19.4" y="6.0" width="1.3" height="1.3"/><rect x="19.4" y="8.0" width="1.3" height="1.3"/><rect x="19.4" y="10.0" width="1.3" height="1.3"/><rect x="13.4" y="12.0" width="1.3" height="1.3"/><rect x="15.4" y="12.0" width="1.3" height="1.3"/><rect x="17.4" y="12.0" width="1.3" height="1.3"/><rect x="17.4" y="4.0" width="1.3" height="1.3"/><rect x="15.4" y="6.0" width="1.3" height="1.3"/><rect x="13.4" y="8.0" width="1.3" height="1.3"/><rect x="35.4" y="0.0" width="1.3" height="1.3"/><rect x="37.4" y="0.0" width="1.3" height="1.3"/><rect x="39.4" y="0.0" width="1.3" height="1.3"/><rect x="33.4" y="2.0" width="1.3" height="1.3"/><rect x="33.4" y="4.0" width="1.3" height="1.3"/><rect x="33.4" y="6.0" width="1.3" height="1.3"/><rect x="33.4" y="8.0" width="1.3" height="1.3"/><rect x="33.4" y="10.0" width="1.3" height="1.3"/><rect x="41.4" y="2.0" width="1.3" height="1.3"/><rect x="41.4" y="4.0" width="1.3" height="1.3"/><rect x="41.4" y="6.0" width="1.3" height="1.3"/><rect x="41.4" y="8.0" width="1.3" height="1.3"/><rect x="41.4" y="10.0" width="1.3" height="1.3"/><rect x="35.4" y="12.0" width="1.3" height="1.3"/><rect x="37.4" y="12.0" width="1.3" height="1.3"/><rect x="39.4" y="12.0" width="1.3" height="1.3"/><rect x="39.4" y="4.0" width="1.3" height="1.3"/><rect x="37.4" y="6.0" width="1.3" height="1.3"/><rect x="35.4" y="8.0" width="1.3" height="1.3"/><rect x="46.3" y="0.0" width="1.3" height="1.3"/><rect x="48.3" y="0.0" width="1.3" height="1.3"/><rect x="50.3" y="0.0" width="1.3" height="1.3"/><rect x="44.3" y="2.0" width="1.3" height="1.3"/><rect x="44.3" y="4.0" width="1.3" height="1.3"/><rect x="44.3" y="6.0" width="1.3" height="1.3"/><rect x="44.3" y="8.0" width="1.3" height="1.3"/><rect x="44.3" y="10.0" width="1.3" height="1.3"/><rect x="52.3" y="2.0" width="1.3" height="1.3"/><rect x="52.3" y="4.0" width="1.3" height="1.3"/><rect x="52.3" y="6.0" width="1.3" height="1.3"/><rect x="52.3" y="8.0" width="1.3" height="1.3"/><rect x="52.3" y="10.0" width="1.3" height="1.3"/><rect x="46.3" y="12.0" width="1.3" height="1.3"/><rect x="48.3" y="12.0" width="1.3" height="1.3"/><rect x="50.3" y="12.0" width="1.3" height="1.3"/><rect x="50.3" y="4.0" width="1.3" height="1.3"/><rect x="48.3" y="6.0" width="1.3" height="1.3"/><rect x="46.3" y="8.0" width="1.3" height="1.3"/><rect x="68.5" y="0.0" width="1.3" height="1.3"/><rect x="70.5" y="0.0" width="1.3" height="1.3"/><rect x="72.5" y="0.0" width="1.3" height="1.3"/><rect x="66.5" y="2.0" width="1.3" height="1.3"/><rect x="66.5" y="4.0" width="1.3" height="1.3"/><rect x="66.5" y="6.0" width="1.3" height="1.3"/><rect x="66.5" y="8.0" width="1.3" height="1.3"/><rect x="66.5" y="10.0" width="1.3" height="1.3"/><rect x="74.5" y="2.0" width="1.3" height="1.3"/><rect x="74.5" y="4.0" width="1.3" height="1.3"/><rect x="74.5" y="6.0" width="1.3" height="1.3"/><rect x="74.5" y="8.0" width="1.3" height="1.3"/><rect x="74.5" y="10.0" width="1.3" height="1.3"/><rect x="68.5" y="12.0" width="1.3" height="1.3"/><rect x="70.5" y="12.0" width="1.3" height="1.3"/><rect x="72.5" y="12.0" width="1.3" height="1.3"/><rect x="72.5" y="4.0" width="1.3" height="1.3"/><rect x="70.5" y="6.0" width="1.3" height="1.3"/><rect x="68.5" y="8.0" width="1.3" height="1.3"/><rect x="77.5" y="0.0" width="1.3" height="1.3"/><rect x="79.5" y="0.0" width="1.3" height="1.3"/><rect x="81.5" y="0.0" width="1.3" height="1.3"/><rect x="83.5" y="0.0" width="1.3" height="1.3"/><rect x="85.5" y="0.0" width="1.3" height="1.3"/><rect x="85.5" y="2.0" width="1.3" height="1.3"/><rect x="85.5" y="4.0" width="1.3" height="1.3"/><rect x="84.5" y="6.0" width="1.3" height="1.3"/><rect x="83.5" y="8.0" width="1.3" height="1.3"/><rect x="83.5" y="10.0" width="1.3" height="1.3"/><rect x="83.5" y="12.0" width="1.3" height="1.3"/><rect x="77.5" y="2.0" width="1.3" height="1.3"/><rect x="26" y="4" width="1.3" height="1.3"/><rect x="26" y="10" width="1.3" height="1.3"/><rect x="59.5" y="4" width="1.3" height="1.3"/><rect x="59.5" y="10" width="1.3" height="1.3"/></g></svg>

<div class="a" style="left:620px;top:475px;width:267px;height:136px;background:#fff;border:1px solid #a0a0a0;border-right:1px solid #d0d0d0"></div>
<div class="a" style="left:627px;top:482px;font-size:12px;color:#1e1e1e;;transform-origin:0 0;transform:translateX(0.90px) scaleX(0.9132)">Start LBA</div>
<div class="a" style="left:719px;top:482px;font-size:12px;color:#1e1e1e;;transform-origin:0 0;transform:translateX(-0.20px) scaleX(0.8826)">Block</div>
<div class="a" style="left:774px;top:482px;font-size:12px;color:#1e1e1e;;transform-origin:0 0;transform:translateX(-0.20px) scaleX(0.9305)">Comment</div>
<div class="a" style="left:713px;top:477px;width:1px;height:132px;background:#eeeeee"></div>
<div class="a" style="left:768px;top:477px;width:1px;height:132px;background:#eeeeee"></div>
<div class="a" style="left:859px;top:477px;width:1px;height:132px;background:#eeeeee"></div>
<div class="a" style="left:622px;top:514px;width:264px;height:1px;background:#f0f0f0"></div>
<div class="a" style="left:622px;top:531px;width:264px;height:1px;background:#f0f0f0"></div>
<div class="a" style="left:622px;top:548px;width:264px;height:1px;background:#f0f0f0"></div>
<div class="a" style="left:622px;top:565px;width:264px;height:1px;background:#f0f0f0"></div>
<div class="a" style="left:622px;top:581px;width:264px;height:1px;background:#f0f0f0"></div>
<div class="a" style="left:622px;top:597px;width:264px;height:1px;background:#f0f0f0"></div>

<div id="gp" class="a"></div>
<div class="a" style="left:899px;top:127px;width:12px;height:12px;border-radius:50%;background:#d4d4d4;border:3px solid #c0c0c0"></div>
<div class="a" style="left:915px;top:126px;font-size:12px;color:#8e8e8e">API</div>
<div class="a" style="left:899px;top:147px;width:12px;height:12px;border-radius:50%;background:#dcdcdc"></div>
<div class="a" style="left:915px;top:146px;font-size:12px;color:#8e8e8e">PIO</div>
<div class="a" style="left:897px;top:174px;width:18px;height:9px;background:#808080;border:1px solid #303030;border-radius:1px"></div>
<div class="wbtn" style="left:897px;top:202px;width:51px;height:19px;border:none"></div>
<div class="a" style="left:897px;top:204px;width:51px;text-align:center;font-size:12px;color:#1e1e1e;;transform-origin:0 0;transform:translateX(1.02px) scaleX(0.9348)">Sleep</div>
<div class="wbtn" style="left:897px;top:259px;width:51px;height:19px;border:none"></div>
<div class="a" style="left:897px;top:261px;width:51px;text-align:center;font-size:12px;color:#1e1e1e;;transform-origin:0 0;transform:translateX(1.74px) scaleX(0.9143)">Recall</div>
<div class="a" style="left:895px;top:506px;width:25px;height:13px;background:#a0a0a0;border:2px solid #3c3c3c;border-radius:2px;font-size:8px;line-height:9px;color:#c0c0c0;text-align:center;font-weight:bold">WR</div>
<div class="a" style="left:925px;top:506px;width:25px;height:13px;background:#a0a0a0;border:2px solid #3c3c3c;border-radius:2px;font-size:8px;line-height:9px;color:#c0c0c0;text-align:center;font-weight:bold">RD</div>
<div class="wbtn" style="left:897px;top:570px;width:51px;height:20px;border:none"></div>
<div class="a" style="left:897px;top:573px;width:51px;text-align:center;font-size:12px;color:#1e1e1e;;transform-origin:0 0;transform:translateX(3.29px) scaleX(0.8633)">Passp</div>

<div class="a" style="left:1px;top:611px;width:888px;height:6px;background:#f2f2f2"></div>
<div id="log" class="a"></div>
<div class="lr" style="left:11px;top:622px">15:28:00</div>
<div class="lr" style="left:73px;top:622px;;transform-origin:0 0;transform:translateX(0.00px) scaleX(0.9479)">Recallibration... OK</div>
<div class="lr" style="left:11px;top:640px">15:28:00</div>
<div class="lr" style="left:73px;top:640px;;transform-origin:0 0;transform:translateX(0.00px) scaleX(0.9647)">Starting Reading, LBA=0..976773167, QUICK, sequential access, timeout 10000ms</div>
<div class="lr" style="left:11px;top:658px">15:32:10</div>
<div class="lr" style="left:73px;top:658px;;transform-origin:0 0;transform:translateX(0.00px) scaleX(0.9963)">*** Scan results: no warnings, no errors. Last block at 976773167 (500 GB), time 4 minutes 10 seconds.</div>
<div class="lr" style="left:11px;top:677px">15:32:10</div>
<div class="lr" style="left:73px;top:677px;color:#3434a2;;transform-origin:0 0;transform:translateX(0.00px) scaleX(0.9789)">Speed: Maximum 114 MB/s. Average 84 MB/s. Minimum 55 MB/s. 672 points.</div>
<div class="a" style="left:873px;top:618px;width:15px;height:80px;background:#f8f8f8"></div><div class="a" style="left:879px;top:666px;width:1.5px;height:15px;background:#7a7a7a"></div>
<div id="gp2" class="a"></div>
<div class="cb" style="left:898px;top:626px"><svg width="11" height="11"><path d="M2.5 5.5l2 2 4-4.5" fill="none" stroke="#fff" stroke-width="1.3"/></svg></div>
<div class="a" style="left:914px;top:624px;font-size:12px;color:#1e1e1e;;transform-origin:0 0;transform:translateX(0.00px) scaleX(0.8858)">Звук</div>
<div class="cb" style="left:898px;top:647px"><svg width="11" height="11"><path d="M2.5 5.5l2 2 4-4.5" fill="none" stroke="#fff" stroke-width="1.3"/></svg></div>
<div class="a" style="left:914px;top:645px;font-size:12px;color:#1e1e1e;;transform-origin:0 0;transform:translateX(0.00px) scaleX(0.9253)">Hints</div>
</div></body></html>
